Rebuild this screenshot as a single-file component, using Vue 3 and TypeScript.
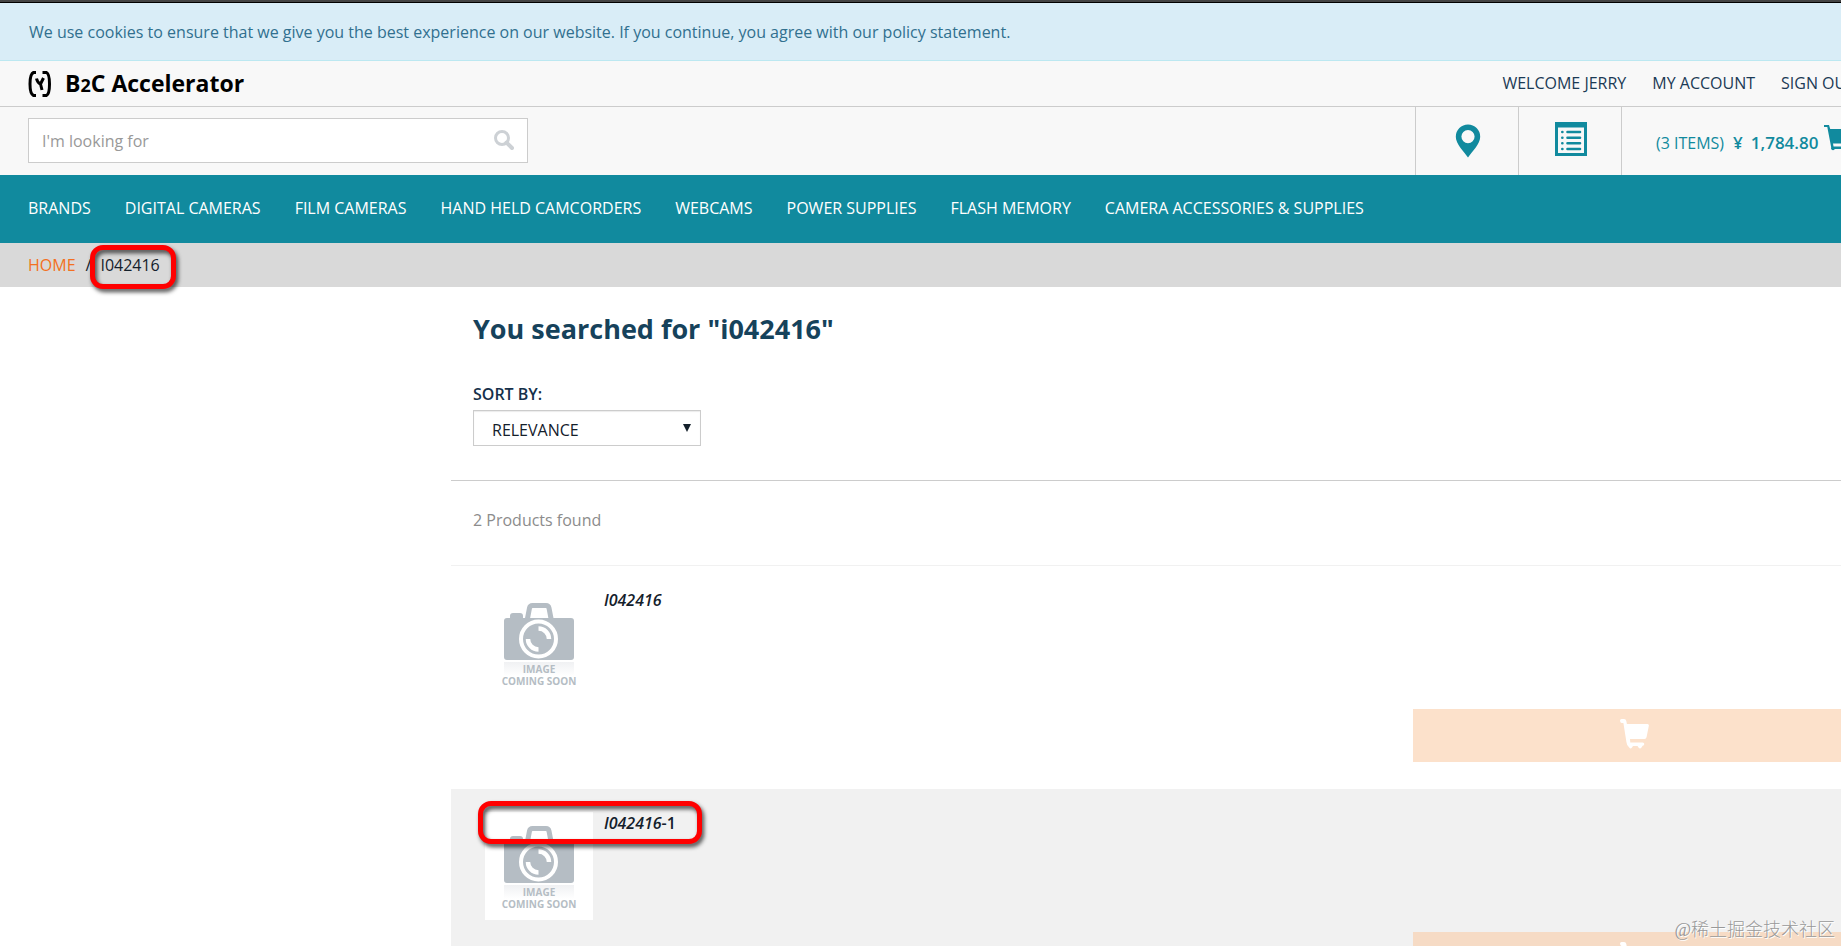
<script setup lang="ts">
import { ref } from 'vue'

interface Product {
  id: number
  name: string
  suffix: string
  marked: boolean
}

const cartPath =
  'M0 1.6Q0 0 1.6 0H4Q6 0 6.3 2L6.9 5H27.5Q29 5 28.9 6.5L26.6 18Q26.3 20 24.5 20H10L10.3 23.5H22.6Q24.3 23.5 24.3 25Q24.3 26.5 22.6 26.8L21.5 28.5Q20 30.500 18.5 28.5L17.5 27H13L12 28.5Q10.5 30.500 9.2 28.5Q6.7 26.5 6.4 23L3.4 4H1.6Q0 4 0 1.6Z'

const accountLinks: string[] = ['Welcome Jerry', 'My Account', 'Sign Out']
const categories: string[] = [
  'Brands',
  'Digital Cameras',
  'Film Cameras',
  'Hand Held Camcorders',
  'Webcams',
  'Power Supplies',
  'Flash Memory',
  'Camera Accessories & Supplies',
]
const products: Product[] = [
  { id: 1, name: 'I042416', suffix: '', marked: false },
  { id: 2, name: 'I042416', suffix: '-1', marked: true },
]
const query = ref('')
const sort = ref('relevance')
</script>

<template>
  <div class="viewport">
    <div class="page">
      <div class="window-edge"></div>
      <div class="cookies" role="status">
        We use cookies to ensure that we give you the best experience on our website. If you continue, you agree with our policy statement.
      </div>

      <header>
        <div class="top-row">
          <a class="logo" href="#">
            <svg width="24" height="28" viewBox="0 0 24 28" aria-hidden="true">
              <path d="M8 2.500H5.500Q2 4 2 14T5.500 25.500H8M14.500 2.500H18.500Q21.500 4 21.500 14T18.500 25.500H14.500" fill="none" stroke="#000" stroke-width="3" />
              <path d="M8.500 8.500Q9.500 13 12.500 14M15.500 8L12.500 14L14 20" fill="none" stroke="#000" stroke-width="3" />
            </svg>
            <span class="brand">B<span class="digit">2</span>C Accelerator</span>
          </a>
          <nav class="account" aria-label="Account">
            <a v-for="link in accountLinks" :key="link" href="#">{{ link }}</a>
          </nav>
        </div>

        <div class="tools-row">
          <form class="search" role="search" @submit.prevent>
            <input v-model="query" type="text" placeholder="I'm looking for" aria-label="Search" />
            <button type="submit" aria-label="Search">
              <svg width="20" height="20" viewBox="0 0 20 20" aria-hidden="true">
                <circle cx="8" cy="8" r="6.500" fill="none" stroke="#cdd1d5" stroke-width="3" />
                <path d="M12.500 12.500L18 18" stroke="#cdd1d5" stroke-width="4" stroke-linecap="round" />
              </svg>
            </button>
          </form>
          <div class="tools">
            <a class="tool" href="#" aria-label="Store finder">
              <svg width="26" height="36" viewBox="0 0 26 36" aria-hidden="true">
                <path fill-rule="evenodd" d="M13 2.500A12.200 12.200 0 0 1 25.200 14.700C25.200 22 17 29.500 13 35.500C9 29.500 0.800 22 0.800 14.700A12.200 12.200 0 0 1 13 2.500ZM13 8A6.600 6.600 0 1 0 13 21.200A6.600 6.600 0 1 0 13 8Z" fill="#118a9e" />
              </svg>
            </a>
            <a class="tool" href="#" aria-label="Quick order">
              <svg width="32" height="34" viewBox="0 0 32 34" aria-hidden="true">
                <path fill-rule="evenodd" d="M0 0H32V34H0ZM3 5.500V31H29V5.500Z" fill="#118a9e" />
                <path d="M12.500 10H25M12.500 15.700H25M12.500 21.300H25M12.500 27H25M7.300 10H7.400M7.300 15.700H7.400M7.300 21.300H7.400M7.300 27H7.400" stroke="#118a9e" stroke-width="2.600" stroke-linecap="round" />
              </svg>
            </a>
            <a class="cart" href="#">
              <span>(3 items)</span>
              <strong><span class="yen">¥</span>1,784.80</strong>
              <svg width="29" height="31" viewBox="0 0 29 31" aria-hidden="true">
                <path d="M0 0H5L6.200 4H29L25.500 18.500H9L9.500 21.500H25V24H7.500L3.300 2H0Z" fill="#118a9e" />
                <circle cx="9" cy="23.500" r="1.800" fill="#118a9e" />
                <circle cx="22" cy="23.500" r="1.800" fill="#118a9e" />
              </svg>
            </a>
          </div>
        </div>
      </header>

      <nav class="categories" aria-label="Categories">
        <a v-for="category in categories" :key="category" href="#">{{ category }}</a>
      </nav>

      <nav class="crumbs" aria-label="Breadcrumb">
        <a href="#">Home</a>
        <span class="slash">/</span>
        <span class="current">I042416<i class="mark mark-crumb"></i></span>
      </nav>

      <div class="columns">
        <main>
          <h1>You searched for "i042416"</h1>
          <div class="sort">
            <label for="sort">Sort by:</label>
            <div class="select-box">
              <select id="sort" v-model="sort">
                <option value="relevance">RELEVANCE</option>
              </select>
              <svg width="8" height="8" viewBox="0 0 8 8" aria-hidden="true"><path d="M0 0H8L4 8Z" fill="#14202b" /></svg>
            </div>
          </div>
          <p class="count">2 Products found</p>
          <ul>
            <li v-for="product in products" :key="product.id">
              <a class="thumb" href="#" :aria-label="product.name + product.suffix">
                <svg width="108" height="108" viewBox="0 0 108 108" aria-hidden="true">
                  <defs>
                    <linearGradient :id="`fade-${product.id}`" x1="0" y1="0" x2="0" y2="1">
                      <stop offset="0" stop-color="#f0f1f3" />
                      <stop offset="1" stop-color="#fff" />
                    </linearGradient>
                  </defs>
                  <rect width="108" height="108" fill="#fff" />
                  <path d="M42 32L44.500 19Q45 16.500 47.500 16.500H61Q63.500 16.500 64 19L66.500 32" fill="none" stroke="#b5bdc4" stroke-width="5" />
                  <path d="M22 29H25V27Q25 24 28 24H35Q38 24 38 27V29H86Q89 29 89 32V68Q89 71 86 71H22Q19 71 19 68V32Q19 29 22 29Z" fill="#b5bdc4" />
                  <circle cx="53.500" cy="50" r="17.500" fill="none" stroke="#fff" stroke-width="4" />
                  <path d="M53.500 39.500A10.500 10.500 0 0 1 64 50M53.500 60.500A10.500 10.500 0 0 1 43 50" fill="none" stroke="#fff" stroke-width="4.500" />
                  <rect x="19" y="73" width="70" height="14" :fill="`url(#fade-${product.id})`" />
                  <text x="54" y="84" text-anchor="middle">IMAGE</text>
                  <text x="54" y="96" text-anchor="middle">COMING SOON</text>
                </svg>
                <i v-if="product.marked" class="mark mark-item"></i>
              </a>
              <a class="name" href="#"><em>{{ product.name }}</em>{{ product.suffix }}</a>
              <button class="add" type="button" disabled aria-label="Add to cart">
                <svg width="29" height="31" viewBox="0 0 29 31" aria-hidden="true">
                  <path :d="cartPath" fill="#fff" />
                </svg>
              </button>
            </li>
          </ul>
        </main>
      </div>
    </div>
    <div class="watermark">@稀土掘金技术社区</div>
  </div>
</template>

<style>
body {
  margin: 0;
}
</style>

<style scoped>
.viewport {
  position: relative;
  height: 100vh;
  overflow: hidden;
  background: #fff;
  color: #14202b;
  font: 16px/24px 'Open Sans', sans-serif;
}
.page {
  margin-right: -42px;
}
a {
  color: inherit;
  text-decoration: none;
}
svg {
  display: block;
}
.window-edge {
  height: 2px;
  background: #444;
  border-bottom: 1px solid #000;
}
.cookies {
  padding: 17px 29px 16px;
  background: #d9edf7;
  border-bottom: 1px solid #bce8f1;
  color: #31708f;
}
header {
  background: #f8f8f8;
}
.top-row {
  display: flex;
  align-items: center;
  justify-content: space-between;
  height: 45px;
  padding: 0 28px;
  border-bottom: 1px solid #ccc;
}
.logo {
  display: flex;
  align-items: center;
  gap: 13px;
  color: #000;
}
.brand {
  font: bold 23px/28px 'Open Sans', sans-serif;
}
.digit {
  font-size: 18px;
}
.account {
  display: flex;
  gap: 26px;
  padding-bottom: 2px;
  color: #1b3a55;
  text-transform: uppercase;
}
.tools-row {
  display: flex;
  justify-content: space-between;
  height: 68px;
  padding-left: 28px;
}
.search {
  display: flex;
  align-items: center;
  box-sizing: border-box;
  width: 500px;
  height: 45px;
  margin-top: 11px;
  border: 1px solid #ccc;
  background: #fff;
}
.search input {
  flex: 1;
  padding: 0 13px;
  border: 0;
  background: none;
  color: #14202b;
  font: inherit;
  outline: 0;
}
.search input::placeholder {
  color: #999;
  opacity: 1;
}
.search button {
  padding: 0 13px 2px;
  border: 0;
  background: none;
}
.tools {
  display: flex;
  color: #118a9e;
}
.tool {
  display: flex;
  justify-content: center;
  box-sizing: border-box;
  width: 103px;
  padding: 15px 0 0 2px;
  border-left: 1px solid #ccc;
}
.cart {
  display: flex;
  gap: 9px;
  box-sizing: border-box;
  width: 262px;
  padding: 24px 0 0 34px;
  border-left: 1px solid #ccc;
  text-transform: uppercase;
}
.cart strong {
  font-size: 17px;
  font-weight: 600;
}
.yen {
  margin-right: 8px;
}
.cart svg {
  margin: -6px 0 0 -3px;
}
.categories {
  display: flex;
  align-items: center;
  box-sizing: border-box;
  gap: 34px;
  height: 68px;
  padding: 0 28px 2px;
  background: #118a9e;
  color: #fff;
  text-transform: uppercase;
}
.crumbs {
  display: flex;
  height: 34px;
  padding: 10px 28px 0;
  background: #d9d9d9;
  text-transform: uppercase;
}
.crumbs a {
  color: #f37021;
}
.slash {
  margin: 0 9px 0 10px;
}
.current {
  position: relative;
}
.mark {
  position: absolute;
  box-sizing: border-box;
  border: 5px solid #f00;
  border-radius: 13px;
  filter: drop-shadow(2px 3px 2px rgba(0, 0, 0, 0.7));
}
.mark-crumb {
  top: -8px;
  left: -10px;
  width: 86px;
  height: 44px;
}
.mark-item {
  top: -11px;
  left: -7px;
  width: 224px;
  height: 43px;
}
.columns {
  display: grid;
  grid-template-columns: 451px 1fr;
}
main {
  grid-column: 2;
}
h1 {
  margin: 0;
  padding: 22px 22px 0;
  color: #16425b;
  font-size: 27px;
  line-height: 40px;
}
.sort {
  padding: 33px 22px 34px;
  border-bottom: 1px solid #ccc;
}
.sort label {
  display: block;
  color: #16304a;
  font-weight: 600;
  line-height: 24px;
  margin-bottom: 4px;
  text-transform: uppercase;
}
.select-box {
  position: relative;
  width: 228px;
}
.select-box select {
  display: block;
  box-sizing: border-box;
  width: 100%;
  height: 36px;
  padding: 3px 18px 0;
  border: 1px solid #ccc;
  border-radius: 0;
  background: #fff;
  box-shadow: inset 0 1px 1px rgba(0, 0, 0, 0.08);
  color: #14202b;
  font: inherit;
  appearance: none;
}
.select-box svg {
  position: absolute;
  top: 14px;
  right: 10px;
  pointer-events: none;
}
.count {
  margin: 0;
  padding: 27px 22px 33px;
  border-bottom: 1px solid #f1f1f1;
  color: #8c8c8c;
}
ul {
  margin: 0;
  padding: 0;
  list-style: none;
}
li {
  display: grid;
  grid-template-columns: 108px 1fr 442px;
  grid-template-rows: 120px 53px;
  column-gap: 11px;
  padding: 23px 28px 27px 34px;
}
li:nth-child(even) {
  background: #f1f1f1;
}
.thumb {
  position: relative;
  grid-row: 1 / 3;
}
.thumb text {
  fill: #b5bdc4;
  font: bold 10px 'Open Sans', sans-serif;
}
.name {
  grid-column: 2;
  font-weight: 600;
  line-height: 22px;
}
.add {
  grid-column: 3;
  grid-row: 2;
  display: flex;
  justify-content: center;
  padding: 10px 0 0;
  border: 0;
  background: rgba(250, 205, 168, 0.6);
}
.watermark {
  position: absolute;
  right: 6px;
  bottom: 2px;
  color: #999;
  font: 300 18px/28px 'Liberation Serif', 'Noto Sans CJK SC', serif;
  text-shadow: 1px 1px 0 #fff;
}
</style>
